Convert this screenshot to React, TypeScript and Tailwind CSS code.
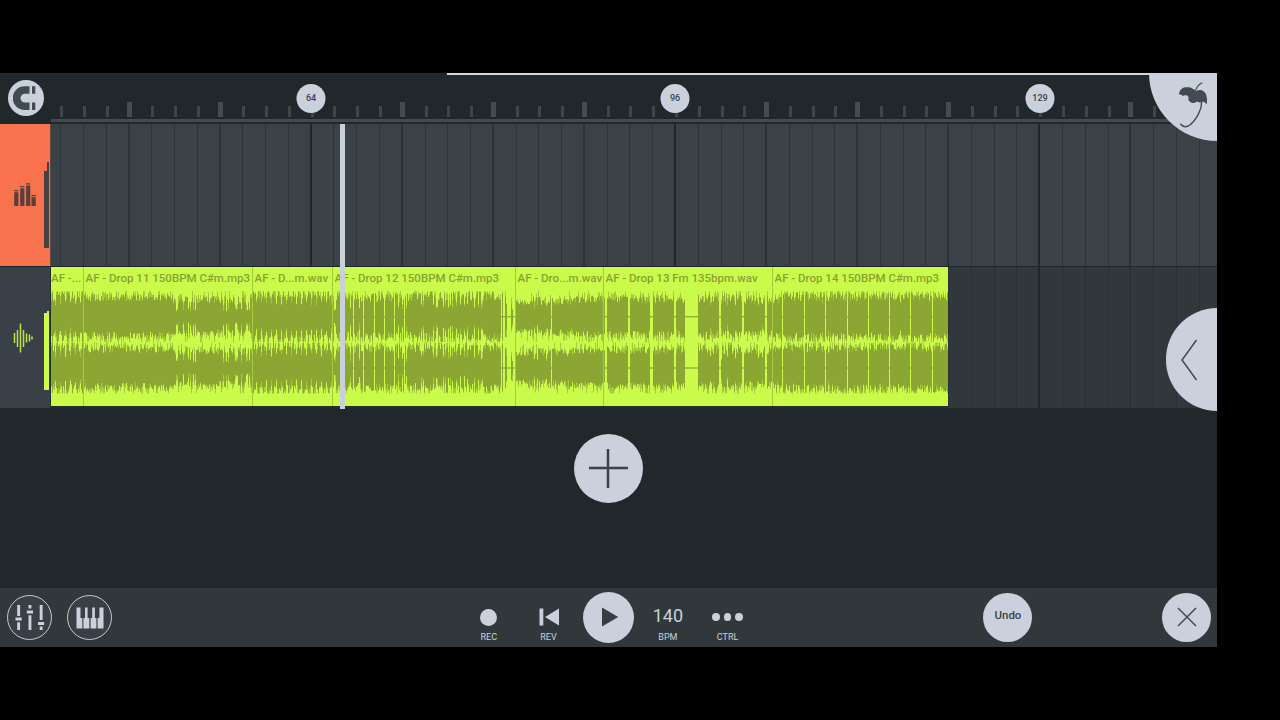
import clsx from 'clsx';

interface Clip {
  name: string;
  start: number;
  width: number;
}

interface WaveSection {
  to: number;
  amp: number;
  jitter: number;
  // how often a thin gap shows up, and how much signal is left inside it
  gapChance: number;
  gapLevel: number;
  spikes?: boolean;
}

const BEATS = Array.from({ length: 51 }, (_, i) => i);

const MARKERS = [
  { label: '64', x: 311 },
  { label: '96', x: 675 },
  { label: '129', x: 1040 },
];

const CLIPS: Clip[] = [
  { name: 'AF -...', start: 51, width: 32 },
  { name: 'AF - Drop 11 150BPM C#m.mp3', start: 83, width: 169 },
  { name: 'AF - D...m.wav', start: 252, width: 80 },
  { name: 'AF - Drop 12 150BPM C#m.mp3', start: 332, width: 183 },
  { name: 'AF - Dro...m.wav', start: 515, width: 88 },
  { name: 'AF - Drop 13 Fm 135bpm.wav', start: 603, width: 169 },
  { name: 'AF - Drop 14 150BPM C#m.mp3', start: 772, width: 176 },
];

const SECTIONS: WaveSection[] = [
  { to: 83, amp: 17, jitter: 8, gapChance: 0, gapLevel: 1, spikes: true },
  { to: 172, amp: 16, jitter: 8, gapChance: 0, gapLevel: 1 },
  { to: 197, amp: 14, jitter: 7, gapChance: 0.25, gapLevel: 0.4 },
  { to: 216, amp: 15, jitter: 7, gapChance: 0, gapLevel: 1 },
  { to: 252, amp: 14, jitter: 7, gapChance: 0.22, gapLevel: 0.4 },
  { to: 332, amp: 18, jitter: 6, gapChance: 0, gapLevel: 1, spikes: true },
  { to: 415, amp: 16, jitter: 9, gapChance: 0.12, gapLevel: 0.4 },
  { to: 500, amp: 17, jitter: 10, gapChance: 0.24, gapLevel: 0.5 },
  { to: 515, amp: 0.4, jitter: 0, gapChance: 0, gapLevel: 1 },
  { to: 527, amp: 12, jitter: 5, gapChance: 0, gapLevel: 1 },
  { to: 572, amp: 13, jitter: 8, gapChance: 0.16, gapLevel: 0.6 },
  { to: 604, amp: 15, jitter: 7, gapChance: 0, gapLevel: 1 },
  { to: 684, amp: 15, jitter: 8, gapChance: 0.06, gapLevel: 0.7 },
  { to: 697, amp: 0.4, jitter: 0, gapChance: 0, gapLevel: 1 },
  { to: 741, amp: 15, jitter: 10, gapChance: 0.12, gapLevel: 0.6 },
  { to: 773, amp: 14, jitter: 8, gapChance: 0.05, gapLevel: 0.7 },
  { to: 948, amp: 17, jitter: 9, gapChance: 0.03, gapLevel: 0.8 },
];

// Silent breaks between the loops
const BREAKS = [
  343, 352, 362, 373, 383, 393, 403, 550, 604, 605, 627, 628, 649, 650, 651, 673, 674, 718, 719, 741, 742, 764, 765, 781,
  803, 824, 846, 867, 888, 909, 931,
];
const HITS: Record<number, number> = { 501: 23, 504: 20, 505: 13, 510: 12, 511: 7 };

function noise(n: number) {
  const v = Math.sin(n * 127.1 + 311.7) * 43758.5453;
  return v - Math.floor(v);
}

function levelAt(x: number, seed: number) {
  if (HITS[x]) return HITS[x];
  if (BREAKS.includes(x)) return 0.5;
  const section = SECTIONS.find((s) => x < s.to) ?? SECTIONS[SECTIONS.length - 1];
  let level = section.amp + (noise(x * 3 + seed) - 0.15) * section.jitter;
  if (section.spikes && x % 5 === 0) level *= 0.65;
  if (section.spikes && x % 5 === 2) level = 25;
  if (noise(x * 7) < section.gapChance) level *= section.gapLevel;
  return Math.min(25, Math.max(0.5, level));
}

// Peaks stick out of the solid body and are drawn fainter
function peakAt(x: number, seed: number) {
  const level = levelAt(x, seed);
  return level < 3 ? level : Math.min(25.5, level + noise(x * 11 + seed) ** 2 * 9);
}

function wavePath(start: number, width: number, level: (x: number, seed: number) => number) {
  let d = '';
  [29.7, 80.9].forEach((center, channel) => {
    for (let i = 0; i < width; i++) {
      const up = level(start + i, channel * 17);
      const down = level(start + i, channel * 17 + 5);
      d += `M${i} ${(center - up).toFixed(1)}h1V${(center + down).toFixed(1)}h-1z`;
    }
  });
  return d;
}

function Waveform({ start, width }: { start: number; width: number }) {
  return (
    <svg width={width} height="119" viewBox={`0 0 ${width} 119`} className="block shrink-0 fill-[#89a232]">
      <path d={wavePath(start, width, peakAt)} opacity="0.55" />
      <path d={wavePath(start, width, levelAt)} opacity="0.9" />
    </svg>
  );
}

function BeatGrid({ dim }: { dim?: boolean }) {
  return (
    <div className={clsx('flex h-full overflow-hidden', dim ? 'bg-[#30383c]' : 'bg-[#3a4147]')}>
      <div className="w-[9.3px] shrink-0" />
      {BEATS.map((i) => (
        <div
          key={i}
          className={clsx(
            'shrink-0',
            i % 16 === 11
              ? '-ml-[1px] w-[23.78px] border-l-2 border-[#20272b]'
              : i % 4 === 3
                ? '-ml-[1px] w-[23.78px] border-l-2 border-[#2c3338]'
                : dim
                  ? 'w-[22.78px] border-l border-[#283034]'
                  : 'w-[22.78px] border-l border-[#2d3439]',
          )}
        />
      ))}
    </div>
  );
}

function Ruler() {
  return (
    <div className="relative flex h-full flex-1 flex-col overflow-hidden">
      <div className="flex h-[44px] items-end pl-[9.3px]">
        {BEATS.map((i) => (
          <div key={i} className="w-[22.78px] shrink-0">
            {i % 4 === 3 && i % 16 !== 11 ? (
              <div className="-ml-[2px] h-[15px] w-[5px] bg-[#454c50]" />
            ) : (
              <div className="h-[11px] w-[3px] bg-[#3f464a]" />
            )}
          </div>
        ))}
      </div>
      <div className="mt-[2px] h-[3px] bg-[#444b4f]" />
      {MARKERS.map((marker) => (
        <div
          key={marker.label}
          className="absolute top-[10.5px] flex size-[29px] -translate-x-1/2 items-center justify-center rounded-full bg-[#cad1dc] pt-[1px] text-[9px] font-medium text-[#3a4249]"
          style={{ left: marker.x - 51 }}
        >
          {marker.label}
        </div>
      ))}
    </div>
  );
}

function MagnetIcon() {
  return (
    <svg width="26" height="26" viewBox="0 0 26 26" fill="#424a52">
      <path d="M16.5 1.3H11.5a11.8 11.8 0 0 0 0 23.6h5v-7.4h-4.6a4.4 4.4 0 0 1 0-8.8h4.6z" />
      <path d="M19 1.3h3.3v7.4H19zM19 17.5h3.3v7.4H19z" />
    </svg>
  );
}

function UmbrellaIcon() {
  return (
    <svg width="32" height="48" viewBox="0 0 32 48" fill="none" stroke="#424a52" strokeLinecap="round">
      <path d="M24 2c-2.8 1-5 3.5-6.3 7" strokeWidth="1.2" />
      <path
        d="M1 13.3C1.2 10.500 2.200 8.800 3.700 7.700c1.800-1.300 3.600-1.500 5.600-1.400 2.200 0 4 .4 5.400 1.400 1.300.7 2.500 1.500 3.300 2.300 2-1 3.900-1.200 5.700-.7 2 .7 3.500 2 4.300 4 1.100 3.200 1.400 6.600.7 10-1-1.400-2-2.300-3.400-2.600-1.200-.2-2.300.2-3.300 1-.9-.9-2-1.200-3.300-1-1.700 1.100-3.400 1.500-5 1-2-.6-3.200-1.800-3.400-3.400.3-1.200.4-1.900 0-2.600-.8-1.100-1.900-1.500-3.300-1.400-.9.200-1.700.400-2.300.7-.9-.9-2.200-1.600-3.700-1.700z"
        fill="#424a52"
        stroke="none"
      />
      <path d="M23.700 21c0 4-1.300 8.500-3.400 12.300-2.800 5-6.100 9.400-10 11.700-2.800 1.300-5.700.5-7.600-1.700" strokeWidth="1.400" />
    </svg>
  );
}

function MixerIcon() {
  return (
    <svg width="30" height="28" viewBox="0 0 30 28" fill="#cad1dc">
      <path d="M2.2 1h2.9v11H2.2zM.5 13.5h6.2v3H.5zM2.2 18.2h2.9V26H2.2z" />
      <path d="M13.500 1h2.900v3.500h-2.900zM11.800 6.500H18v3h-6.200zM13.500 11.200h2.900V26h-2.900z" />
      <path d="M24.700 1h2.900v15h-2.900zM23 18h6.200v3H23zM24.700 22.600h2.900V26h-2.900z" />
    </svg>
  );
}

function PianoIcon() {
  return (
    <svg width="28" height="22" viewBox="0 0 28 22" fill="#cad1dc">
      <path d="M.5.5h4V11h1.800v10.500H.5zM9 .5h2.600V11h1.700v10.500H7.400V11H9zM16.200.5h2.700V11h1.500v10.500h-5.800V11h1.600zM23.400.5h4.100v21h-5.900V11h1.800z" />
    </svg>
  );
}

function DrumIcon() {
  return (
    <svg width="23" height="24" viewBox="0 0 23 24" fill="#5a3f3b">
      <path d="M.2 7h4.200v1.300H.2zM.2 9.300h4.200V23H.2zM6.200 3h4.200v1.300H6.200zM6.200 5.300h4.200V23H6.200zM12.100.2h4.200v1.300h-4.200zM12.100 2.500h4.200V23h-4.200zM17.500 12h4.300v1.300h-4.300zM17.500 14.300h4.300V23h-4.300z" />
    </svg>
  );
}

function AudioIcon() {
  return (
    <svg width="20" height="30" viewBox="0 0 20 30" fill="none" stroke="#b7e548" strokeWidth="1.5">
      <path d="M1.500 10v10M4.500 7v17M7.500.5v29M10.500 7v17M13.500 10.500v9M16.500 11.500v7M19 13.500v3" />
    </svg>
  );
}

function Transport({ label, children }: { label: string; children: React.ReactNode }) {
  return (
    <div className="flex w-[59.7px] flex-col items-center pt-[15px]">
      <div className="flex h-[28px] items-center justify-center">{children}</div>
      <span className="pt-[1px] text-[9px] leading-[11px] text-[#cad1dc]">{label}</span>
    </div>
  );
}

export default function App() {
  return (
    <div className="h-[720px] w-[1280px] overflow-hidden bg-black pt-[73px] font-['Roboto','Liberation_Sans',sans-serif]">
      <div className="relative flex h-[574px] w-[1217px] flex-col overflow-hidden bg-[#20282c]">
        {/* Timeline header */}
        <div className="flex h-[51px]">
          <div className="flex w-[51px] shrink-0 pt-[7px] pl-[7.5px]">
            <div className="flex size-[36px] items-center justify-center rounded-full bg-[#cad1dc]">
              <MagnetIcon />
            </div>
          </div>
          <Ruler />
        </div>

        {/* Drum track */}
        <div className="flex h-[143px] border-b border-[#20272b]">
          <div className="flex w-[51px] shrink-0 items-center border-r border-[#65483f] bg-[#f8724d] pl-[14px]">
            <DrumIcon />
            <div className="mt-[20px] ml-[6.5px] flex items-end">
              <div className="h-[77px] w-[3px] bg-[#47423f]" />
              <div className="h-[86px] w-[2px] bg-[#47423f]" />
            </div>
          </div>
          <div className="min-w-0 flex-1">
            <BeatGrid />
          </div>
        </div>

        {/* Audio track */}
        <div className="flex h-[141px]">
          <div className="flex w-[51px] shrink-0 items-center border-r border-[#262d31] bg-[#394047] pl-[12.5px]">
            <AudioIcon />
            <div className="mt-[26px] ml-[11px] flex items-end">
              <div className="h-[77px] w-[3px] bg-[#cbfb4c]" />
              <div className="h-[79px] w-[2px] bg-[#cbfb4c]" />
            </div>
          </div>
          <div className="relative min-w-0 flex-1">
            <BeatGrid dim />
            <div className="absolute top-0 left-0 flex h-[141px] border-b-2 border-[#262e2c]">
              {CLIPS.map((clip, i) => (
                <div
                  key={clip.start}
                  className={clsx('flex flex-col overflow-hidden bg-[#cbfb4a]', i > 0 && 'border-l border-[#a8c83e]')}
                  style={{ width: clip.width }}
                >
                  <div
                    className={clsx(
                      'h-[20px] shrink-0 pt-[4px] text-[11.5px] leading-[14px] font-medium whitespace-nowrap text-[#89a232]',
                      i > 0 && 'pl-[1.5px]',
                    )}
                  >
                    {clip.name}
                  </div>
                  <Waveform start={clip.start} width={clip.width} />
                </div>
              ))}
            </div>
          </div>
        </div>

        {/* Add track */}
        <div className="flex flex-1 justify-center pt-[26px]">
          <button className="flex size-[69px] items-center justify-center rounded-full bg-[#cad1dc]">
            <svg width="39" height="39" viewBox="0 0 39 39" fill="none" stroke="#3a4249" strokeWidth="2.5">
              <path d="M19 0v39M0 19h39" />
            </svg>
          </button>
        </div>

        {/* Bottom bar */}
        <div className="flex h-[59px] shrink-0 bg-[#31383c] pl-[7px]">
          <div className="flex items-center gap-[15px]">
            <button className="flex size-[45px] items-center justify-center rounded-full border-[1.5px] border-[#c3cad3] bg-[#383f45]">
              <MixerIcon />
            </button>
            <button className="flex size-[45px] items-center justify-center rounded-full border-[1.5px] border-[#c3cad3] bg-[#383f45]">
              <PianoIcon />
            </button>
          </div>
          <div className="ml-[347px] flex">
            <Transport label="REC">
              <div className="size-[17px] rounded-full bg-[#cad1dc]" />
            </Transport>
            <Transport label="REV">
              <svg width="20" height="18" viewBox="0 0 20 18" fill="#cad1dc">
                <path d="M.5.5h3.800v17H.5zM20 .5v17L6 9z" />
              </svg>
            </Transport>
            <div className="flex w-[59.7px] items-center justify-center">
              <button className="flex size-[51px] items-center justify-center rounded-full bg-[#cad1dc]">
                <svg width="18" height="20" viewBox="0 0 18 20" fill="#363d43" className="mb-[1px] ml-[3px]">
                  <path d="M1 .5 17.200 10 1 19.500z" />
                </svg>
              </button>
            </div>
            <Transport label="BPM">
              <span className="mb-[2px] text-[18px] leading-none text-[#cad1dc]">140</span>
            </Transport>
            <Transport label="CTRL">
              <div className="flex gap-[4px]">
                <div className="size-[7.5px] rounded-full bg-[#cad1dc]" />
                <div className="size-[7.5px] rounded-full bg-[#cad1dc]" />
                <div className="size-[7.5px] rounded-full bg-[#cad1dc]" />
              </div>
            </Transport>
          </div>
          <div className="ml-[226px] flex items-center gap-[130px]">
            <button className="flex size-[49px] items-center justify-center rounded-full bg-[#cad1dc] pb-[3px] text-[11.5px] font-medium text-[#3a4249]">
              Undo
            </button>
            <button className="flex size-[49px] items-center justify-center rounded-full bg-[#cad1dc]">
              <svg width="20" height="20" viewBox="0 0 20 20" fill="none" stroke="#424a52" strokeWidth="1.5" className="mb-[1px]">
                <path d="m1 1 18 18M19 1 1 19" />
              </svg>
            </button>
          </div>
        </div>

        {/* Overlays: loop range, playhead, song menu and side panel handle */}
        <div className="absolute top-0 right-0 h-[2px] w-[770px] bg-[#d0d6df]" />
        <div className="absolute top-[51px] left-[340px] h-[285px] w-[5px] bg-[#c8d0d8]" />
        <div className="absolute top-0 right-0 size-[68px] rounded-bl-full bg-[#cad1dc] pt-[8px] pl-[29px]">
          <UmbrellaIcon />
        </div>
        <div className="absolute top-[235px] right-0 flex h-[103px] w-[51px] items-center rounded-l-full bg-[#cad1dc] pl-[15px]">
          <svg width="17" height="42" viewBox="0 0 17 42" fill="none" stroke="#424a52" strokeWidth="1.5">
            <path d="M15.500 1 1 21l14.500 20" />
          </svg>
        </div>
      </div>
    </div>
  );
}
